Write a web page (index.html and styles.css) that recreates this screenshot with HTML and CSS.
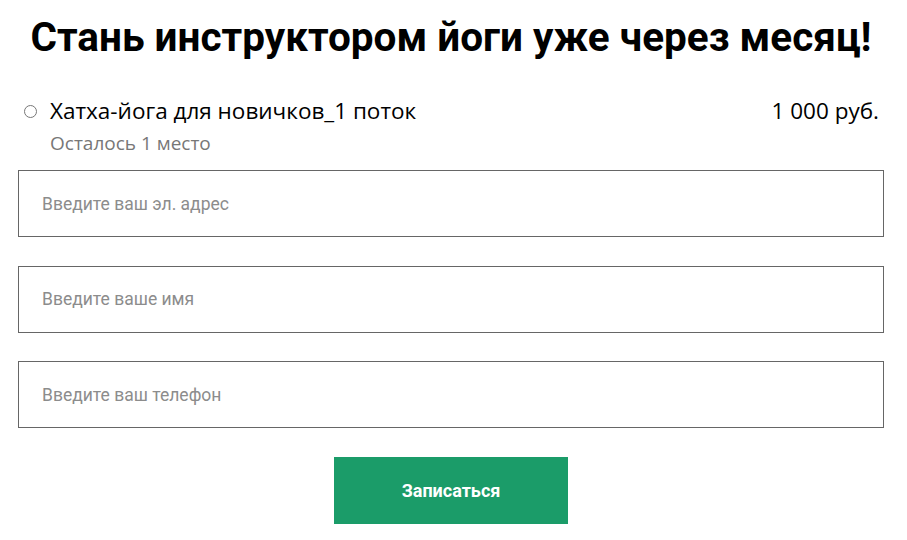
FILE: index.html
```html
<!DOCTYPE html>
<html lang="ru">
<head>
    <meta charset="UTF-8">
    <meta name="viewport" content="width=device-width, initial-scale=1.0">
    <title>Стань инструктором йоги</title>
    <link rel="stylesheet" href="styles.css">
</head>
<body>
    <div class="container">
        <h1>Стань инструктором йоги уже через месяц!</h1>

        <div class="course">
            <label class="course-option">
                <span class="radio"></span>
                <span class="course-name">Хатха-йога для новичков_1 поток</span>
            </label>
            <span class="course-price">1 000 руб.</span>
        </div>
        <p class="course-left">Осталось 1 место</p>

        <form class="signup" onsubmit="return false;">
            <input type="email" class="field" placeholder="Введите ваш эл. адрес">
            <input type="text" class="field" placeholder="Введите ваше имя">
            <input type="tel" class="field" placeholder="Введите ваш телефон">
            <button class="btn" type="submit">Записаться</button>
        </form>
    </div>
</body>
</html>
```

FILE: styles.css
```css
body {
    margin: 0;
    padding: 0;
    background-color: #fff;
    font-family: "Open Sans", "Liberation Sans", sans-serif;
    color: #000;
}
.container {
    padding: 14px 23px 0 18px;
}
h1 {
    margin: 0;
    font-family: Roboto, "Liberation Sans", sans-serif;
    font-weight: 700;
    font-size: 40.5px;
    line-height: 46px;
    text-align: center;
}
.course {
    display: flex;
    justify-content: space-between;
    align-items: center;
    margin-top: 36px;
    padding-left: 6px;
}
.course-option {
    display: flex;
    align-items: center;
}
.radio {
    width: 11px;
    height: 11px;
    border: 1px solid #777;
    border-radius: 50%;
    margin-right: 13px;
}
.course-name,
.course-price {
    font-size: 22.5px;
    line-height: 30px;
}
.course-price {
    margin-right: 5px;
}
.course-left {
    margin: 5px 0 0 32px;
    font-size: 19px;
    line-height: 24px;
    color: #777;
}
.signup {
    display: flex;
    flex-direction: column;
    margin-top: 15px;
}
.field {
    box-sizing: border-box;
    height: 67px;
    width: 100%;
    margin-bottom: 28.5px;
    padding: 0 23px;
    border: 1px solid #666;
    border-radius: 0;
    font-family: Roboto, "Liberation Sans", sans-serif;
    font-size: 17.5px;
    color: #333;
    outline: none;
}
.field::placeholder {
    color: #8c8c8c;
}
.field:last-of-type {
    margin-bottom: 29px;
}
.btn {
    align-self: center;
    width: 234px;
    height: 67px;
    border: none;
    background-color: #1b9c69;
    color: #fff;
    font-family: Roboto, "Liberation Sans", sans-serif;
    font-weight: 700;
    font-size: 18px;
    cursor: pointer;
}
```
